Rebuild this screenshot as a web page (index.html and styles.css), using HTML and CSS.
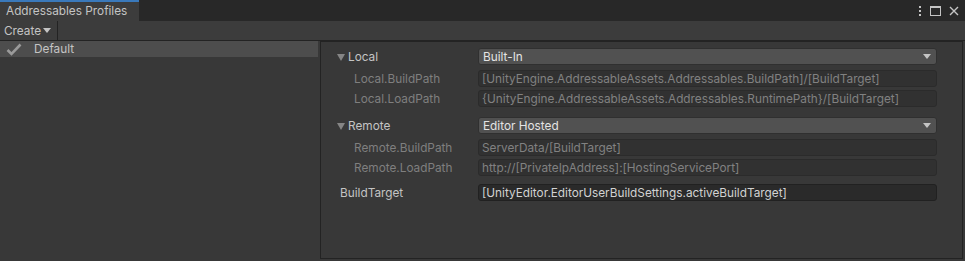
FILE: index.html
```html
<!DOCTYPE html>
<html lang="en">
<head>
  <meta charset="UTF-8">
  <title>Addressables Profiles</title>
  <link rel="stylesheet" href="styles.css">
</head>
<body>
  <!-- Window tab bar -->
  <header class="tabbar">
    <div class="tab">Addressables Profiles</div>
    <div class="window-icons">
      <svg width="4" height="10" viewBox="0 0 4 10"><rect x="1" y="0" width="2" height="2" fill="#c4c4c4"/><rect x="1" y="4" width="2" height="2" fill="#c4c4c4"/><rect x="1" y="8" width="2" height="2" fill="#c4c4c4"/></svg>
      <svg width="11" height="10" viewBox="0 0 11 10"><rect x="0.5" y="0.5" width="10" height="9" fill="none" stroke="#c4c4c4"/><rect x="0" y="0" width="11" height="2" fill="#c4c4c4"/></svg>
      <svg width="10" height="10" viewBox="0 0 10 10"><path d="M1 1 L9 9 M9 1 L1 9" stroke="#c4c4c4" stroke-width="1.4"/></svg>
    </div>
  </header>

  <!-- Toolbar -->
  <div class="toolbar">
    <div class="create-btn">Create <span class="caret"></span></div>
  </div>

  <div class="content">
    <!-- Profile list -->
    <aside class="profiles">
      <div class="profile-row">
        <svg class="check" width="16" height="13" viewBox="0 0 16 13"><path d="M1.5 7 L5.5 11 L14.5 1.5" fill="none" stroke="#9a9a9a" stroke-width="2.6"/></svg>
        <span>Default</span>
      </div>
    </aside>

    <!-- Profile variables -->
    <main class="panel">
      <section class="group">
        <div class="row header">
          <span class="label"><span class="fold"></span>Local</span>
          <div class="dropdown">Built-In <span class="arrow"></span></div>
        </div>
        <div class="row sub">
          <span class="label">Local.BuildPath</span>
          <div class="field disabled">[UnityEngine.AddressableAssets.Addressables.BuildPath]/[BuildTarget]</div>
        </div>
        <div class="row sub">
          <span class="label">Local.LoadPath</span>
          <div class="field disabled">{UnityEngine.AddressableAssets.Addressables.RuntimePath}/[BuildTarget]</div>
        </div>
      </section>

      <section class="group">
        <div class="row header">
          <span class="label"><span class="fold"></span>Remote</span>
          <div class="dropdown">Editor Hosted <span class="arrow"></span></div>
        </div>
        <div class="row sub">
          <span class="label">Remote.BuildPath</span>
          <div class="field disabled">ServerData/[BuildTarget]</div>
        </div>
        <div class="row sub">
          <span class="label">Remote.LoadPath</span>
          <div class="field disabled">http://[PrivateIpAddress]:[HostingServicePort]</div>
        </div>
      </section>

      <div class="row plain">
        <span class="label">BuildTarget</span>
        <div class="field">[UnityEditor.EditorUserBuildSettings.activeBuildTarget]</div>
      </div>
    </main>
  </div>
</body>
</html>
```

FILE: styles.css
```css
/* Reset & General */
* {
  margin: 0;
  padding: 0;
  box-sizing: border-box;
}

body {
  width: 965px;
  height: 261px;
  overflow: hidden;
  background-color: #383838;
  font-family: Inter, 'Noto Sans', sans-serif;
  font-size: 11.8px;
  color: #c4c4c4;
  display: flex;
  flex-direction: column;
}

/* Tab bar */
.tabbar {
  height: 21px;
  background-color: #282828;
  display: flex;
  align-items: stretch;
}

.tab {
  width: 139px;
  background-color: #3c3c3c;
  border-top: 2px solid #3a79bb;
  padding-left: 6px;
  line-height: 19px;
  color: #c4c4c4;
}

.window-icons {
  margin-left: auto;
  display: flex;
  align-items: center;
  gap: 8px;
  padding-right: 6px;
  padding-top: 1px;
}

/* Toolbar */
.toolbar {
  height: 20px;
  background-color: #3c3c3c;
  border-bottom: 1px solid #232323;
  display: flex;
}

.create-btn {
  width: 58px;
  border-right: 1px solid #232323;
  padding-left: 4px;
  line-height: 20px;
  color: #c4c4c4;
}

.caret {
  display: inline-block;
  border-left: 4px solid transparent;
  border-right: 4px solid transparent;
  border-top: 5px solid #c4c4c4;
  vertical-align: 2px;
  margin-left: -1px;
}

/* Content */
.content {
  flex: 1;
  display: flex;
}

.profiles {
  width: 320px;
}

.profile-row {
  width: 318px;
  height: 16px;
  background-color: #4d4d4d;
  display: flex;
  align-items: center;
  color: #c4c4c4;
}

.check {
  margin-left: 6px;
  margin-right: 12px;
}

/* Variables panel */
.panel {
  flex: 1;
  border: 1px solid #232323;
  margin-right: 2px;
  margin-bottom: 2px;
  padding: 6px 25px 0 0;
}

.group {
  margin-bottom: 10px;
}

.row {
  display: flex;
  align-items: center;
  height: 17px;
}

.row.header {
  margin-bottom: 5px;
}

.row.sub {
  margin-bottom: 3px;
}

.row.plain {
  margin-top: -2px;
}

.label {
  width: 157px;
  flex-shrink: 0;
  display: flex;
  align-items: center;
  padding-top: 1px;
}

.header .label {
  padding-left: 16px;
  color: #c4c4c4;
}

.sub .label {
  padding-left: 33px;
  color: #7f7f7f;
}

.plain .label {
  padding-left: 19px;
  color: #c4c4c4;
}

.fold {
  display: inline-block;
  border-left: 4px solid transparent;
  border-right: 4px solid transparent;
  border-top: 7px solid #858585;
  margin-right: 3px;
  margin-top: 1px;
}

.dropdown {
  flex: 1;
  height: 17px;
  background-color: #515151;
  border: 1px solid #303030;
  border-radius: 3px;
  padding-left: 4px;
  line-height: 16px;
  color: #e4e4e4;
  display: flex;
  align-items: center;
}

.arrow {
  margin-left: auto;
  margin-right: 5px;
  border-left: 4px solid transparent;
  border-right: 4px solid transparent;
  border-top: 5px solid #c4c4c4;
}

.field {
  flex: 1;
  height: 17px;
  background-color: #2a2a2a;
  border: 1px solid #212121;
  border-radius: 3px;
  padding-left: 3px;
  line-height: 16px;
  color: #d2d2d2;
  white-space: nowrap;
  overflow: hidden;
}

.field.disabled {
  background-color: #313131;
  border-color: #2b2b2b;
  color: #818181;
}
```
